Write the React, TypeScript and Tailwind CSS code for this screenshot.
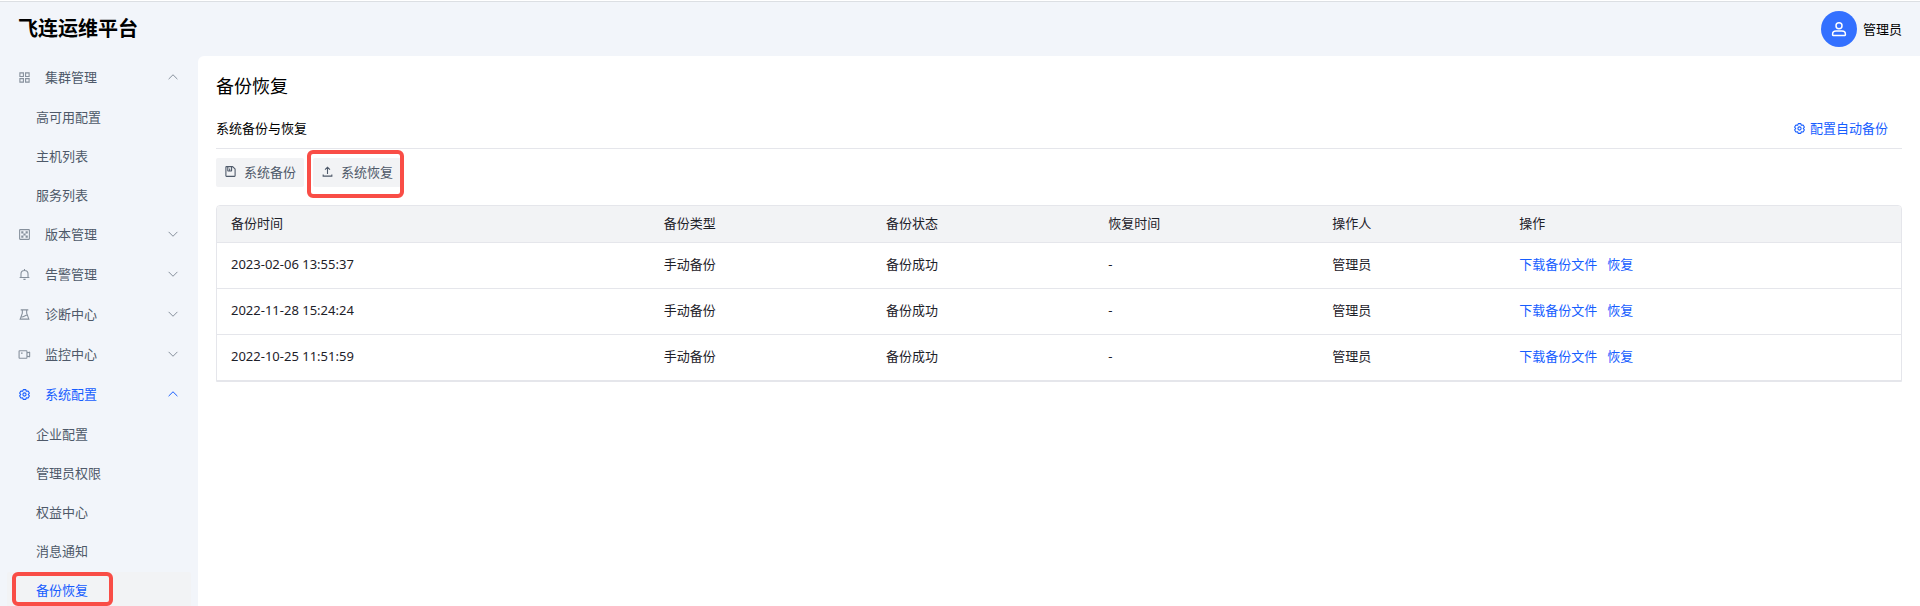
import React, { useState } from "react";

const ICONS = {
  apps: "M7 7h13v13H7zM28 7h13v13H28zM7 28h13v13H7zM28 28h13v13H28z",
  version:
    "M8 6h32a2 2 0 0 1 2 2v32a2 2 0 0 1-2 2H8a2 2 0 0 1-2-2V8a2 2 0 0 1 2-2ZM14 14h4v4h-4zM30 14h4v4h-4zM22 22h4v4h-4zM14 30h4v4h-4zM30 30h4v4h-4z",
  bell: "M24 9c7.18 0 13 5.82 13 13v13H11V22c0-7.18 5.82-13 13-13Zm0 0V4M6 35h36M20 42h8",
  flask: "M10 7h28M16 7v12L8 41h32l-8-22V7M12 33c8 2 14-6 22-7",
  camera:
    "M33 18v12m0-12v-6a2 2 0 0 0-2-2H6a2 2 0 0 0-2 2v24a2 2 0 0 0 2 2h25a2 2 0 0 0 2-2v-6m0-12 8.7-2.6a1 1 0 0 1 1.3.9v15.4a1 1 0 0 1-1.3.9L33 30M11 19h6",
  settings:
    "M18.797 6.732A1 1 0 0 1 19.76 6h8.48a1 1 0 0 1 .964.732l1.285 4.628a1 1 0 0 0 1.213.7l4.651-1.2a1 1 0 0 1 1.116.468l4.24 7.344a1 1 0 0 1-.153 1.2L38.193 23.3a1 1 0 0 0 0 1.402l3.364 3.427a1 1 0 0 1 .153 1.2l-4.24 7.344a1 1 0 0 1-1.116.468l-4.65-1.2a1 1 0 0 0-1.214.7l-1.285 4.628a1 1 0 0 1-.964.732h-8.48a1 1 0 0 1-.963-.732L17.51 36.64a1 1 0 0 0-1.213-.7l-4.65 1.2a1 1 0 0 1-1.116-.468l-4.24-7.344a1 1 0 0 1 .153-1.2L9.809 24.7a1 1 0 0 0 0-1.402l-3.364-3.427a1 1 0 0 1-.153-1.2l4.24-7.344a1 1 0 0 1 1.116-.468l4.65 1.2a1 1 0 0 0 1.213-.7l1.286-4.628ZM30 24a6 6 0 1 1-12 0 6 6 0 0 1 12 0Z",
  save: "M21 13v9m18 20H9a2 2 0 0 1-2-2V8a2 2 0 0 1 2-2h22.55a2 2 0 0 1 1.414.586l7.45 7.45A2 2 0 0 1 41 15.45V40a2 2 0 0 1-2 2ZM14 6h14v15a1 1 0 0 1-1 1H15a1 1 0 0 1-1-1V6Z",
  upload: "M14.93 17.071 24 8l9.071 9.071M24 33.142v-25M40 35v6H8v-6",
  user: "M7 37c0-4.97 4.03-8 9-8h16c4.97 0 9 3.03 9 8v3a1 1 0 0 1-1 1H8a1 1 0 0 1-1-1v-3ZM32 15a8 8 0 1 1-16 0 8 8 0 0 1 16 0Z",
  down: "M41.6 15.443 24.043 33 6.487 15.443",
  up: "M41.6 32.557 24.043 15 6.487 32.557",
};

type IconName = keyof typeof ICONS;

const Icon: React.FC<{ name: IconName; className?: string }> = ({
  name,
  className = "w-[13px] h-[13px]",
}) => (
  <svg
    viewBox="0 0 48 48"
    fill="none"
    stroke="currentColor"
    strokeWidth={4}
    aria-hidden="true"
    className={`flex-shrink-0 ${className}`}
  >
    <path d={ICONS[name]} />
  </svg>
);

interface MenuGroup {
  icon: IconName;
  label: string;
  children?: string[];
}

const MENU: MenuGroup[] = [
  {
    icon: "apps",
    label: "集群管理",
    children: ["高可用配置", "主机列表", "服务列表"],
  },
  { icon: "version", label: "版本管理" },
  { icon: "bell", label: "告警管理" },
  { icon: "flask", label: "诊断中心" },
  { icon: "camera", label: "监控中心" },
  {
    icon: "settings",
    label: "系统配置",
    children: ["企业配置", "管理员权限", "权益中心", "消息通知", "备份恢复"],
  },
];

const BACKUPS = [
  { time: "2023-02-06 13:55:37", type: "手动备份", status: "备份成功", restored: "-", operator: "管理员" },
  { time: "2022-11-28 15:24:24", type: "手动备份", status: "备份成功", restored: "-", operator: "管理员" },
  { time: "2022-10-25 11:51:59", type: "手动备份", status: "备份成功", restored: "-", operator: "管理员" },
];

const COLUMNS = [
  { title: "备份时间", width: "w-[25.7%]" },
  { title: "备份类型", width: "w-[13.2%]" },
  { title: "备份状态", width: "w-[13.2%]" },
  { title: "恢复时间", width: "w-[13.3%]" },
  { title: "操作人", width: "w-[11.1%]" },
  { title: "操作", width: "w-auto" },
];

// Red frame drawn over the item it points at
const Highlight: React.FC<{ className: string }> = ({ className }) => (
  <span
    className={`absolute border-4 border-[#f94d46] rounded-md pointer-events-none ${className}`}
  />
);

const Sidebar: React.FC = () => {
  const [open, setOpen] = useState<string[]>(["集群管理", "系统配置"]);
  const active = "备份恢复";

  const toggle = (label: string) =>
    setOpen((prev) =>
      prev.includes(label) ? prev.filter((l) => l !== label) : [...prev, label]
    );

  return (
    <nav className="w-[198px] flex-shrink-0 px-[7px] pt-[3px] overflow-hidden">
      {MENU.map((group) => {
        const isOpen = open.includes(group.label);
        const isCurrent = !!group.children?.includes(active);
        return (
          <div key={group.label}>
            <button
              onClick={() => toggle(group.label)}
              aria-expanded={isOpen}
              className={`w-full h-9 mb-1 pl-[11px] pr-3 flex items-center ${
                isCurrent ? "text-[#165dff]" : "text-[#4e5969]"
              }`}
            >
              <Icon
                name={group.icon}
                className={`w-[13px] h-[13px] mr-3.5 ${
                  isCurrent ? "" : "text-[#86909c]"
                }`}
              />
              <span className="flex-1 text-left">{group.label}</span>
              <Icon
                name={isOpen ? "up" : "down"}
                className={`w-3 h-3 ${isCurrent ? "" : "text-[#86909c]"}`}
              />
            </button>
            {isOpen &&
              group.children?.map((item) => (
                <a
                  key={item}
                  href="#"
                  className={`relative h-9 mb-[3px] pl-[29px] flex items-center rounded-xs ${
                    item === active
                      ? "bg-[#f2f3f5] text-[#165dff]"
                      : "text-[#4e5969]"
                  }`}
                >
                  {item}
                  {item === active && (
                    <Highlight className="left-[5px] top-0 w-[101px] h-[34px]" />
                  )}
                </a>
              ))}
          </div>
        );
      })}
    </nav>
  );
};

const BackupTable: React.FC = () => (
  <div className="mt-[18px] border border-[#e5e6eb] rounded-t overflow-hidden">
    <table className="w-full table-fixed text-left text-[#1d2129]">
      <thead className="bg-[#f2f3f5]">
        <tr className="h-9 border-b border-[#e5e6eb]">
          {COLUMNS.map((col) => (
            <th
              key={col.title}
              className={`${col.width} px-3.5 pb-0.5 font-normal`}
            >
              {col.title}
            </th>
          ))}
        </tr>
      </thead>
      <tbody>
        {BACKUPS.map((row) => (
          <tr key={row.time} className="h-[46px] border-b border-[#e5e6eb]">
            <td className="px-3.5 pb-0.5">{row.time}</td>
            <td className="px-3.5 pb-0.5">{row.type}</td>
            <td className="px-3.5 pb-0.5">{row.status}</td>
            <td className="px-3.5 pb-0.5">{row.restored}</td>
            <td className="px-3.5 pb-0.5">{row.operator}</td>
            <td className="px-3.5 pb-0.5">
              <div className="flex gap-2.5 text-[#165dff]">
                <a href="#">下载备份文件</a>
                <a href="#">恢复</a>
              </div>
            </td>
          </tr>
        ))}
      </tbody>
    </table>
  </div>
);

export default function App() {
  return (
    <div className="h-screen flex flex-col overflow-hidden bg-[#f2f5fa] text-[13px] leading-5 text-black font-['Noto_Sans','Noto_Sans_CJK_SC',sans-serif]">
      {/* Header */}
      <div className="h-0.5 flex-shrink-0 bg-white border-b border-[#dcdfe3]" />
      <header className="h-[54px] flex-shrink-0 px-[18px] flex items-center justify-between">
        <h1 className="text-xl font-bold">飞连运维平台</h1>
        <div className="flex items-center gap-1.5">
          <div className="w-9 h-9 rounded-full bg-[#3370ff] text-white flex items-center justify-center">
            <Icon name="user" className="w-[18px] h-[18px]" />
          </div>
          <span>管理员</span>
        </div>
      </header>

      <div className="flex-1 min-h-0 flex">
        <Sidebar />

        <main className="flex-1 min-w-0 bg-white rounded-tl-md px-[18px] pt-[18px]">
          <h2 className="text-lg leading-6">备份恢复</h2>

          <div className="mt-5 pb-2.5 pr-3.5 flex items-center justify-between border-b border-[#e5e6eb]">
            <h3>系统备份与恢复</h3>
            <a href="#" className="flex items-center gap-1 text-[#165dff]">
              <Icon name="settings" />
              配置自动备份
            </a>
          </div>

          <div className="mt-[9px] flex gap-[9px] text-[#4e5969]">
            <button className="h-[29px] px-2 pb-0.5 flex items-center gap-[7px] bg-[#f2f3f5] rounded-xs">
              <Icon name="save" />
              系统备份
            </button>
            <button className="relative h-[29px] px-2 pb-0.5 flex items-center gap-[7px] bg-[#f2f3f5] rounded-xs">
              <Icon name="upload" />
              系统恢复
              <Highlight className="-left-1.5 -top-2 w-[97px] h-12" />
            </button>
          </div>

          <BackupTable />
        </main>
      </div>
    </div>
  );
}
